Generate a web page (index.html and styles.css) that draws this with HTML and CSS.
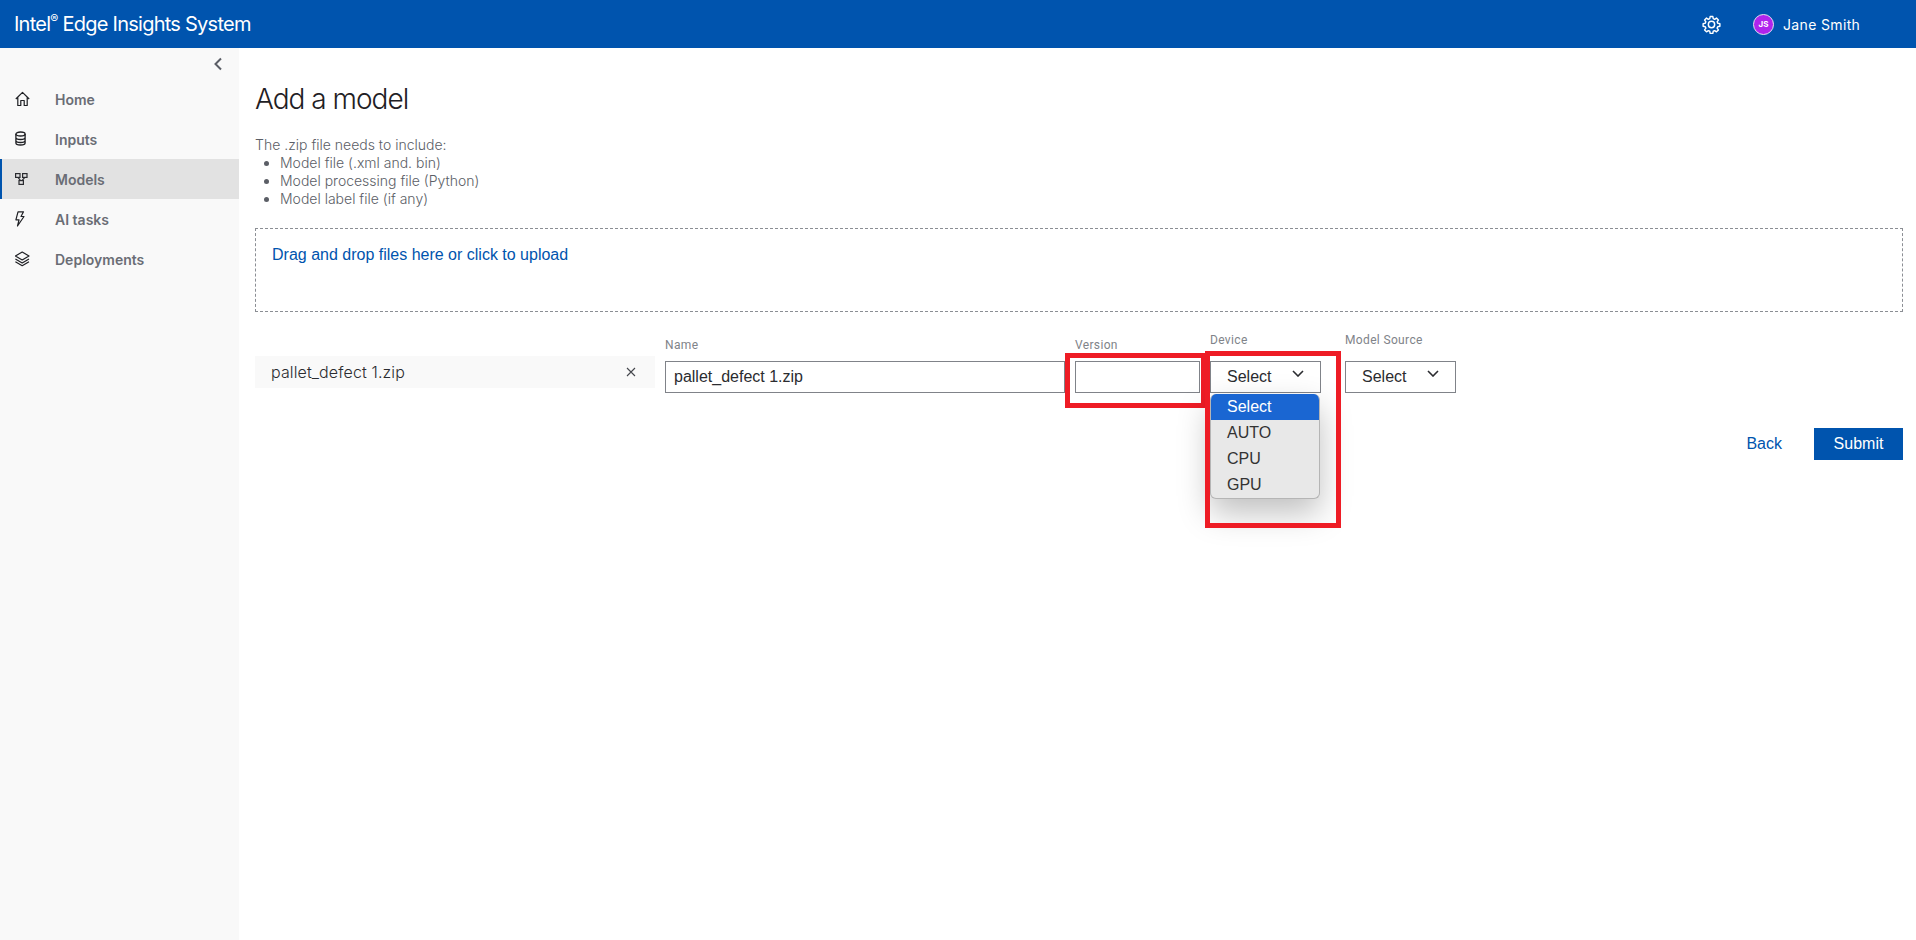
FILE: index.html
```html
<!DOCTYPE html>
<html lang="en">
<head>
    <meta charset="UTF-8">
    <meta name="viewport" content="width=device-width, initial-scale=1.0">
    <title>Add a model</title>
    <link rel="stylesheet" href="styles.css">
</head>
<body>
    <header class="topbar">
        <div class="brand">Intel<sup>®</sup> Edge Insights System</div>
        <div class="topbar-right">
            <svg class="gear" viewBox="0 0 24 24" fill="none" stroke="#fff" stroke-width="1.8" stroke-linejoin="round">
                <path d="M10.3 2h3.4l.5 2.7 1.8.8 2.3-1.6 2.4 2.4-1.6 2.3.8 1.8 2.7.5v3.4l-2.7.5-.8 1.8 1.6 2.3-2.4 2.4-2.3-1.6-1.8.8-.5 2.7h-3.4l-.5-2.7-1.8-.8-2.3 1.6-2.4-2.4 1.6-2.3-.8-1.8-2.7-.5v-3.4l2.7-.5.8-1.8-1.6-2.3 2.4-2.4 2.3 1.6 1.8-.8z"/>
                <circle cx="12" cy="12" r="4"/>
            </svg>
            <span class="avatar">JS</span>
            <span class="user-name">Jane Smith</span>
        </div>
    </header>

    <div class="layout">
        <aside class="sidebar">
            <div class="collapse">
                <svg width="10" height="14" viewBox="0 0 10 14" fill="none" stroke="#5b5e66" stroke-width="2"><path d="M8 1.5 2.5 7 8 12.5"/></svg>
            </div>
            <nav>
                <a class="nav-item">
                    <svg class="nav-icon" viewBox="0 0 16 16" fill="none" stroke="#1f2024" stroke-width="1.2" stroke-linejoin="round"><path d="M.8 8 7.500 1.300 14.200 8M2.800 6.500V14.500h3V9.500h3.400v5h3V6.500"/></svg>
                    Home
                </a>
                <a class="nav-item">
                    <svg class="nav-icon" viewBox="0 0 16 16" fill="none" stroke="#1f2024" stroke-width="1.300"><ellipse cx="5.500" cy="3" rx="4.600" ry="2"/><path d="M.9 3v9c0 1.100 2 2 4.600 2s4.600-.9 4.600-2V3M.9 6.500c0 1.100 2 2 4.600 2s4.600-.9 4.600-2M.9 9.500c0 1.100 2 2 4.600 2s4.600-.9 4.600-2"/></svg>
                    Inputs
                </a>
                <a class="nav-item active">
                    <svg class="nav-icon" viewBox="0 0 16 16" fill="none" stroke="#2b2c30" stroke-width="1.200"><rect x=".6" y="2.600" width="4.400" height="3.800"/><rect x="7.600" y="2.600" width="4.400" height="3.800"/><rect x="4" y="9.600" width="4.400" height="3.800"/><path d="M3 6.400 5.500 9.600M9.800 6.400 7 9.600"/></svg>
                    Models
                </a>
                <a class="nav-item">
                    <svg class="nav-icon" viewBox="0 0 16 16" fill="none" stroke="#1f2024" stroke-width="1.200" stroke-linejoin="round"><path d="M3 .8h5.500L6 5.500h3L2.500 15 4 8.800H.9z"/></svg>
                    AI tasks
                </a>
                <a class="nav-item">
                    <svg class="nav-icon" viewBox="0 0 16 16" fill="none" stroke="#1f2024" stroke-width="1.200" stroke-linejoin="round"><path d="M7.200 1 14 5 7.200 9 .4 5zM.4 8l6.800 4L14 8M.4 10.700l6.800 4 6.800-4"/></svg>
                    Deployments
                </a>
            </nav>
        </aside>

        <main class="content">
            <h1 class="page-title">Add a model</h1>
            <div class="requirements">
                The .zip file needs to include:
                <ul>
                    <li>Model file (.xml and. bin)</li>
                    <li>Model processing file (Python)</li>
                    <li>Model label file (if any)</li>
                </ul>
            </div>

            <div class="dropzone">Drag and drop files here or click to upload</div>

            <div class="file-row">
                <div class="file-chip">
                    <span>pallet_defect 1.zip</span>
                    <svg width="10" height="10" viewBox="0 0 10 10" stroke="#44464c" stroke-width="1.100"><path d="M1 1l8 8M9 1 1 9"/></svg>
                </div>
                <div class="field field-name">
                    <label>Name</label>
                    <input class="text-input" type="text" value="pallet_defect 1.zip">
                </div>
                <div class="field field-version">
                    <label>Version</label>
                    <input class="text-input" type="text">
                    <div class="callout callout-version"></div>
                </div>
                <div class="field field-device">
                    <label>Device</label>
                    <div class="select-box">Select
                        <svg class="chevron" viewBox="0 0 12 7" fill="none" stroke="#2b2c30" stroke-width="1.600"><path d="M1 1l5 5 5-5"/></svg>
                    </div>
                    <div class="dropdown">
                        <div class="option selected">Select</div>
                        <div class="option">AUTO</div>
                        <div class="option">CPU</div>
                        <div class="option">GPU</div>
                    </div>
                    <div class="callout callout-device"></div>
                </div>
                <div class="field field-source">
                    <label>Model Source</label>
                    <div class="select-box">Select
                        <svg class="chevron" viewBox="0 0 12 7" fill="none" stroke="#2b2c30" stroke-width="1.600"><path d="M1 1l5 5 5-5"/></svg>
                    </div>
                </div>
            </div>

            <div class="actions">
                <a class="back-link">Back</a>
                <button class="submit-button">Submit</button>
            </div>
        </main>
    </div>
</body>
</html>
```

FILE: styles.css
```css
* {
    box-sizing: border-box;
}

body {
    margin: 0;
    height: 940px;
    overflow: hidden;
    font-family: Inter, "Noto Sans", sans-serif;
    background: #fff;
    color: #2b2c30;
}

.topbar {
    height: 48px;
    background: #0054ae;
    color: #fff;
    display: flex;
    align-items: center;
    justify-content: space-between;
    padding: 0 0 0 14px;
}

.brand {
    font-size: 20px;
    letter-spacing: -0.75px;
}

.brand sup {
    font-size: 12px;
    line-height: 0;
}

.topbar-right {
    display: flex;
    align-items: center;
    width: 214px;
}

.gear {
    width: 19px;
    height: 19px;
    margin-right: 32px;
}

.avatar {
    width: 21px;
    height: 21px;
    border-radius: 50%;
    background: #b024ec;
    border: 1px solid #e3e3f0;
    font-size: 8px;
    font-weight: 700;
    display: flex;
    align-items: center;
    justify-content: center;
    margin-right: 9px;
}

.user-name {
    font-size: 14px;
    letter-spacing: 0.35px;
}

.layout {
    display: flex;
    height: 892px;
}

.sidebar {
    width: 239px;
    flex: none;
    background: #f9f9f9;
}

.collapse {
    height: 31px;
    display: flex;
    align-items: center;
    justify-content: flex-end;
    padding-right: 16px;
}

.nav-item {
    height: 40px;
    display: flex;
    align-items: center;
    padding-left: 13px;
    font-size: 14px;
    font-weight: 600;
    color: #6a6d75;
    border-left: 2px solid transparent;
}

.nav-item.active {
    background: #e2e2e2;
    border-left-color: #0054ae;
}

.nav-icon {
    width: 16px;
    height: 16px;
    margin-right: 24px;
    flex: none;
}

.content {
    flex: 1;
    padding: 0 13px 0 16px;
}

.page-title {
    margin: 34px 0 0;
    font-size: 28px;
    line-height: 34px;
    font-weight: 300;
    letter-spacing: -1px;
    color: #1f2024;
}

.requirements {
    margin-top: 20px;
    font-size: 14px;
    line-height: 18px;
    font-weight: 300;
    color: #5b5e66;
}

.requirements ul {
    margin: 0;
    padding-left: 25px;
}

.dropzone {
    margin-top: 20px;
    height: 84px;
    border: 1px dashed #8b8e94;
    padding: 16px;
    font-family: "Liberation Sans", Arial, sans-serif;
    font-size: 16px;
    line-height: 19px;
    color: #0054ae;
}

.file-row {
    margin-top: 21px;
    display: flex;
    align-items: flex-end;
}

.file-chip {
    width: 400px;
    height: 32px;
    margin: 0 10px 5px 0;
    background: #f9f9f9;
    display: flex;
    align-items: center;
    justify-content: space-between;
    padding: 0 19px 0 16px;
    font-size: 16px;
    font-weight: 300;
    letter-spacing: 0.12px;
    color: #2b2c30;
}

.field {
    position: relative;
    display: flex;
    flex-direction: column;
    margin-right: 10px;
}

.field label {
    font-family: Roboto, "Liberation Sans", sans-serif;
    font-size: 12px;
    line-height: 14px;
    letter-spacing: 0.35px;
    color: #808389;
    margin-bottom: 9px;
}

.field-name {
    width: 400px;
}

.field-version {
    width: 125px;
}

.field-device {
    width: 111px;
    margin-right: 24px;
}

.field-device label,
.field-source label {
    margin-bottom: 14px;
}

.field-source {
    width: 111px;
}

.text-input,
.select-box {
    height: 32px;
    border: 1px solid #808389;
    background: #fff;
    font-family: "Liberation Sans", Arial, sans-serif;
    font-size: 16px;
    color: #2b2c30;
    border-radius: 0;
}

.text-input {
    padding: 0 8px;
    width: 100%;
}

.select-box {
    display: flex;
    align-items: center;
    justify-content: space-between;
    padding: 0 16px 0 16px;
}

.chevron {
    width: 12px;
    height: 7px;
    margin-bottom: 8px;
}

/* native option list, opened over the page */
.dropdown {
    position: absolute;
    top: 61px;
    left: 0;
    width: 110px;
    height: 105px;
    background: #e8e8e8;
    border: 1px solid #b5b5b5;
    border-top: 0;
    border-radius: 6px;
    overflow: hidden;
    font-family: "Liberation Sans", Arial, sans-serif;
    font-size: 16px;
    color: #333;
    box-shadow: 0 14px 32px rgba(0, 0, 0, 0.25);
}

.option {
    height: 26px;
    line-height: 26px;
    padding-left: 16px;
}

.option.selected {
    background: #1a66d2;
    color: #fff;
}

/* red annotation boxes on top of the screenshot */
.callout {
    position: absolute;
    border: 5px solid #ee1c25;
}

.callout-version {
    left: -10px;
    top: 15px;
    width: 141px;
    height: 55px;
}

.callout-device {
    left: -5px;
    top: 18px;
    width: 136px;
    height: 177px;
}

.actions {
    margin-top: 35px;
    display: flex;
    align-items: center;
    justify-content: flex-end;
    font-family: "Liberation Sans", Arial, sans-serif;
    font-size: 16px;
}

.back-link {
    color: #0054ae;
    margin-right: 32px;
}

.submit-button {
    width: 89px;
    height: 32px;
    border: none;
    background: #0054ae;
    color: #fff;
    font-family: inherit;
    font-size: 16px;
}
```
